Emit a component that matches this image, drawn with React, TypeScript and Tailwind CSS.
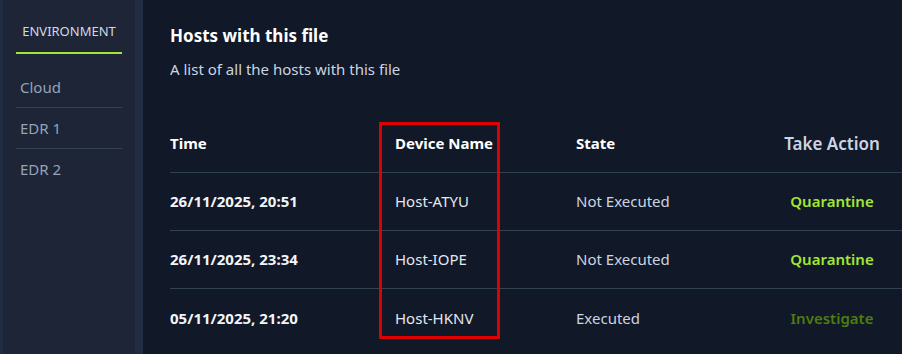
const rows = [
  { time: '26/11/2025, 20:51', device: 'Host-ATYU', state: 'Not Executed', action: 'Quarantine' },
  { time: '26/11/2025, 23:34', device: 'Host-IOPE', state: 'Not Executed', action: 'Quarantine' },
  { time: '05/11/2025, 21:20', device: 'Host-HKNV', state: 'Executed', action: 'Investigate' },
];

const envs = ['Cloud', 'EDR 1', 'EDR 2'];

export default function App() {
  return (
    <div
      className="w-[902px] h-[354px] flex overflow-hidden bg-[#111827]"
      style={{ fontFamily: '"Noto Sans", "Open Sans", sans-serif' }}
    >
      {/* sidebar */}
      <div className="w-[143px] shrink-0 h-full bg-[#212b41] pl-[3px] pr-[8px]">
        <div className="h-full bg-[#1d2537] pt-[21px] px-[13px]">
          <div className="h-[33px] border-b-2 border-[#a3e635] text-center text-[13px] text-[#d1d9e6] leading-[20px]">
            ENVIRONMENT
          </div>
          <div className="mt-[13px]">
            {envs.map((e, i) => (
              <div
                key={e}
                className={`h-[41px] flex items-center px-[4px] text-[15px] text-[#94a3b8] ${i < envs.length - 1 ? 'border-b border-[#334155]' : ''}`}
              >
                {e}
              </div>
            ))}
          </div>
        </div>
      </div>

      {/* main */}
      <div className="relative flex-1 pl-[27px] pt-[24px]">
        <h2 className="text-[17px] font-bold text-white leading-[24px]">Hosts with this file</h2>
        <p className="mt-[11px] text-[15px] text-[#cbd5e1] leading-[20px]">A list of all the hosts with this file</p>

        <div className="mt-[36px] w-[732px]">
          <div className="grid grid-cols-[225px_181px_186px_140px] h-[58px] items-center border-b border-[#334155]">
            <div className="text-[15px] font-bold text-white">Time</div>
            <div className="text-[15px] font-bold text-white">Device Name</div>
            <div className="text-[15px] font-bold text-white">State</div>
            <div className="text-center text-[17px] font-semibold text-[#cbd5e1]">Take Action</div>
          </div>
          {rows.map((r, i) => (
            <div
              key={r.time}
              className={`grid grid-cols-[225px_181px_186px_140px] h-[58px] items-center ${i < rows.length - 1 ? 'border-b border-[#334155]' : ''}`}
            >
              <div className="text-[15px] font-bold text-[#f1f5f9]">{r.time}</div>
              <div className="text-[15px] text-[#e2e8f0]">{r.device}</div>
              <div className="text-[15px] text-[#cbd5e1]">{r.state}</div>
              <div
                className={`text-center text-[15px] font-semibold ${r.action === 'Quarantine' ? 'text-[#a3e635]' : 'text-[#4d7c0f]'}`}
              >
                {r.action}
              </div>
            </div>
          ))}
        </div>

        {/* highlight box */}
        <div className="absolute left-[236px] top-[122px] w-[121px] h-[217px] border-[3px] border-[#e00000]" />
      </div>
    </div>
  );
}
